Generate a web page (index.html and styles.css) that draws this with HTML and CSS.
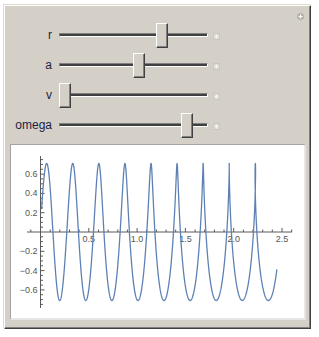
FILE: index.html
```html
<!DOCTYPE html>
<html lang="en">
<head>
    <meta charset="UTF-8">
    <meta name="viewport" content="width=device-width, initial-scale=1.0">
    <title>Manipulate</title>
    <link rel="stylesheet" href="styles.css">
</head>
<body>

    <div class="panel">
        <span class="corner-plus">
            <svg width="7" height="7" viewBox="0 0 7 7"><circle cx="3.5" cy="3.5" r="3.5" fill="#b4b1ab"/><path d="M3.5 1.5v4M1.5 3.5h4" stroke="#fff" stroke-width="1.2"/></svg>
        </span>

        <div class="controls">
            <div class="row">
                <span class="label">r</span>
                <div class="slider"><div class="track"></div><div class="thumb" style="left:97px"></div></div>
                <span class="step"><svg width="7" height="7" viewBox="0 0 7 7"><rect x="0.5" y="0.5" width="6" height="6" fill="#dedbd5" stroke="#cac6bf"/><path d="M3.5 1.5v4M1.5 3.5h4" stroke="#f4f3f0" stroke-width="1"/></svg></span>
            </div>
            <div class="row">
                <span class="label">a</span>
                <div class="slider"><div class="track"></div><div class="thumb" style="left:74px"></div></div>
                <span class="step"><svg width="7" height="7" viewBox="0 0 7 7"><rect x="0.5" y="0.5" width="6" height="6" fill="#dedbd5" stroke="#cac6bf"/><path d="M3.5 1.5v4M1.5 3.5h4" stroke="#f4f3f0" stroke-width="1"/></svg></span>
            </div>
            <div class="row">
                <span class="label">v</span>
                <div class="slider"><div class="track"></div><div class="thumb" style="left:0px"></div></div>
                <span class="step"><svg width="7" height="7" viewBox="0 0 7 7"><rect x="0.5" y="0.5" width="6" height="6" fill="#dedbd5" stroke="#cac6bf"/><path d="M3.5 1.5v4M1.5 3.5h4" stroke="#f4f3f0" stroke-width="1"/></svg></span>
            </div>
            <div class="row">
                <span class="label">omega</span>
                <div class="slider"><div class="track"></div><div class="thumb" style="left:122px"></div></div>
                <span class="step"><svg width="7" height="7" viewBox="0 0 7 7"><rect x="0.5" y="0.5" width="6" height="6" fill="#dedbd5" stroke="#cac6bf"/><path d="M3.5 1.5v4M1.5 3.5h4" stroke="#f4f3f0" stroke-width="1"/></svg></span>
            </div>
        </div>

        <div class="pane">
            <svg id="plot" width="293" height="173" viewBox="11 145 293 173"></svg>
        </div>
    </div>

    <script>
        // page coordinates: x = 0 at 40.5px, y = 0 at 232px
        const X = t => 40.5 + 96.6 * t;
        const Y = v => 232 - 96.5 * v;
        const NS = "http://www.w3.org/2000/svg";
        const plot = document.getElementById('plot');

        function add(tag, attrs, text) {
            const el = document.createElementNS(NS, tag);
            for (const k in attrs) el.setAttribute(k, attrs[k]);
            if (text) el.textContent = text;
            plot.appendChild(el);
            return el;
        }

        // axes
        let ticks = "M27 232H292M40.5 156V308";
        for (let i = -1; i <= 26; i++) {
            if (i === 0) continue;
            const len = i % 5 === 0 ? 4 : 2.5;
            ticks += `M${X(i / 10).toFixed(1)} 232v${-len}`;
        }
        for (let i = -15; i <= 15; i++) {
            if (i === 0) continue;
            const len = i % 4 === 0 ? 4 : 2.5;
            ticks += `M40.5 ${Y(i / 20).toFixed(1)}h${len}`;
        }
        add('path', { d: ticks, stroke: '#5a5a5a', 'stroke-width': 1, fill: 'none' });

        ["0.5", "1.0", "1.5", "2.0", "2.5"].forEach(s => {
            add('text', { x: X(+s), y: 242, 'text-anchor': 'middle', class: 'tick' }, s);
        });
        ["0.6", "0.4", "0.2", "-0.2", "-0.4", "-0.6"].forEach(s => {
            add('text', { x: 37.5, y: Y(+s) + 3, 'text-anchor': 'end', class: 'tick' }, s.replace('-', '\u2212'));
        });

        // curve
        const c = 0.04297, t0 = -1.23, t1 = 54.4;
        let d = "";
        for (let th = t0; th <= t1; th += 0.01) {
            const b = 0.05 * (th - t0) / (16 * Math.PI - t0);
            const x = 0.064 + c * th - b * Math.sin(th);
            const y = 0.71 * Math.cos(th);
            d += (d ? "L" : "M") + X(x).toFixed(2) + " " + Y(y).toFixed(2);
        }
        add('path', { d: d, stroke: '#5e81b5', 'stroke-width': 1.3, fill: 'none', 'stroke-linejoin': 'round' });
    </script>

</body>
</html>
```

FILE: styles.css
```css
body {
    margin: 0;
    padding: 5px 0 0 4px;
    background: #fff;
    font-family: 'Liberation Sans', Arial, sans-serif;
}
.panel {
    position: relative;
    box-sizing: border-box;
    width: 307px;
    height: 324px;
    background: #d4d0c8;
    border: 1px solid;
    border-color: #fff #404040 #404040 #fff;
    box-shadow: inset -1px -1px 0 #808080, -1px -1px 0 #dcd9d2;
}
.corner-plus {
    position: absolute;
    top: 7px;
    right: 6px;
    width: 7px;
    height: 7px;
    display: flex;
}
.controls {
    padding-top: 14px;
}
.row {
    display: flex;
    align-items: center;
    height: 30px;
}
.label {
    width: 47px;
    margin-right: 7px;
    text-align: right;
    font-size: 12px;
    color: #1e1e44;
}
.slider {
    position: relative;
    width: 149px;
    height: 25px;
    display: flex;
    align-items: center;
}
.track {
    box-sizing: border-box;
    width: 100%;
    height: 4px;
    background: #404040;
    border-top: 1px solid #808080;
    border-left: 1px solid #808080;
    border-bottom: 1px solid #fff;
    border-right: 1px solid #fff;
}
.thumb {
    position: absolute;
    top: 0;
    box-sizing: border-box;
    width: 12px;
    height: 25px;
    background: #d4d0c8;
    border: 1px solid;
    border-color: #fff #404040 #404040 #fff;
    box-shadow: inset -1px -1px 0 #808080;
}
.step {
    display: flex;
    margin: 2px 0 0 5px;
}
.pane {
    box-sizing: border-box;
    width: 296px;
    height: 176px;
    margin: 4px 0 0 5px;
    background: #fff;
    border-top: 1px solid #a3a3a3;
    border-left: 1px solid #a3a3a3;
    border-right: 2px solid #e6e6e6;
    border-bottom: 2px solid #e6e6e6;
}
.pane svg {
    display: block;
}
.tick {
    font-family: 'Liberation Sans', Arial, sans-serif;
    font-size: 9px;
    fill: #555;
}
```
